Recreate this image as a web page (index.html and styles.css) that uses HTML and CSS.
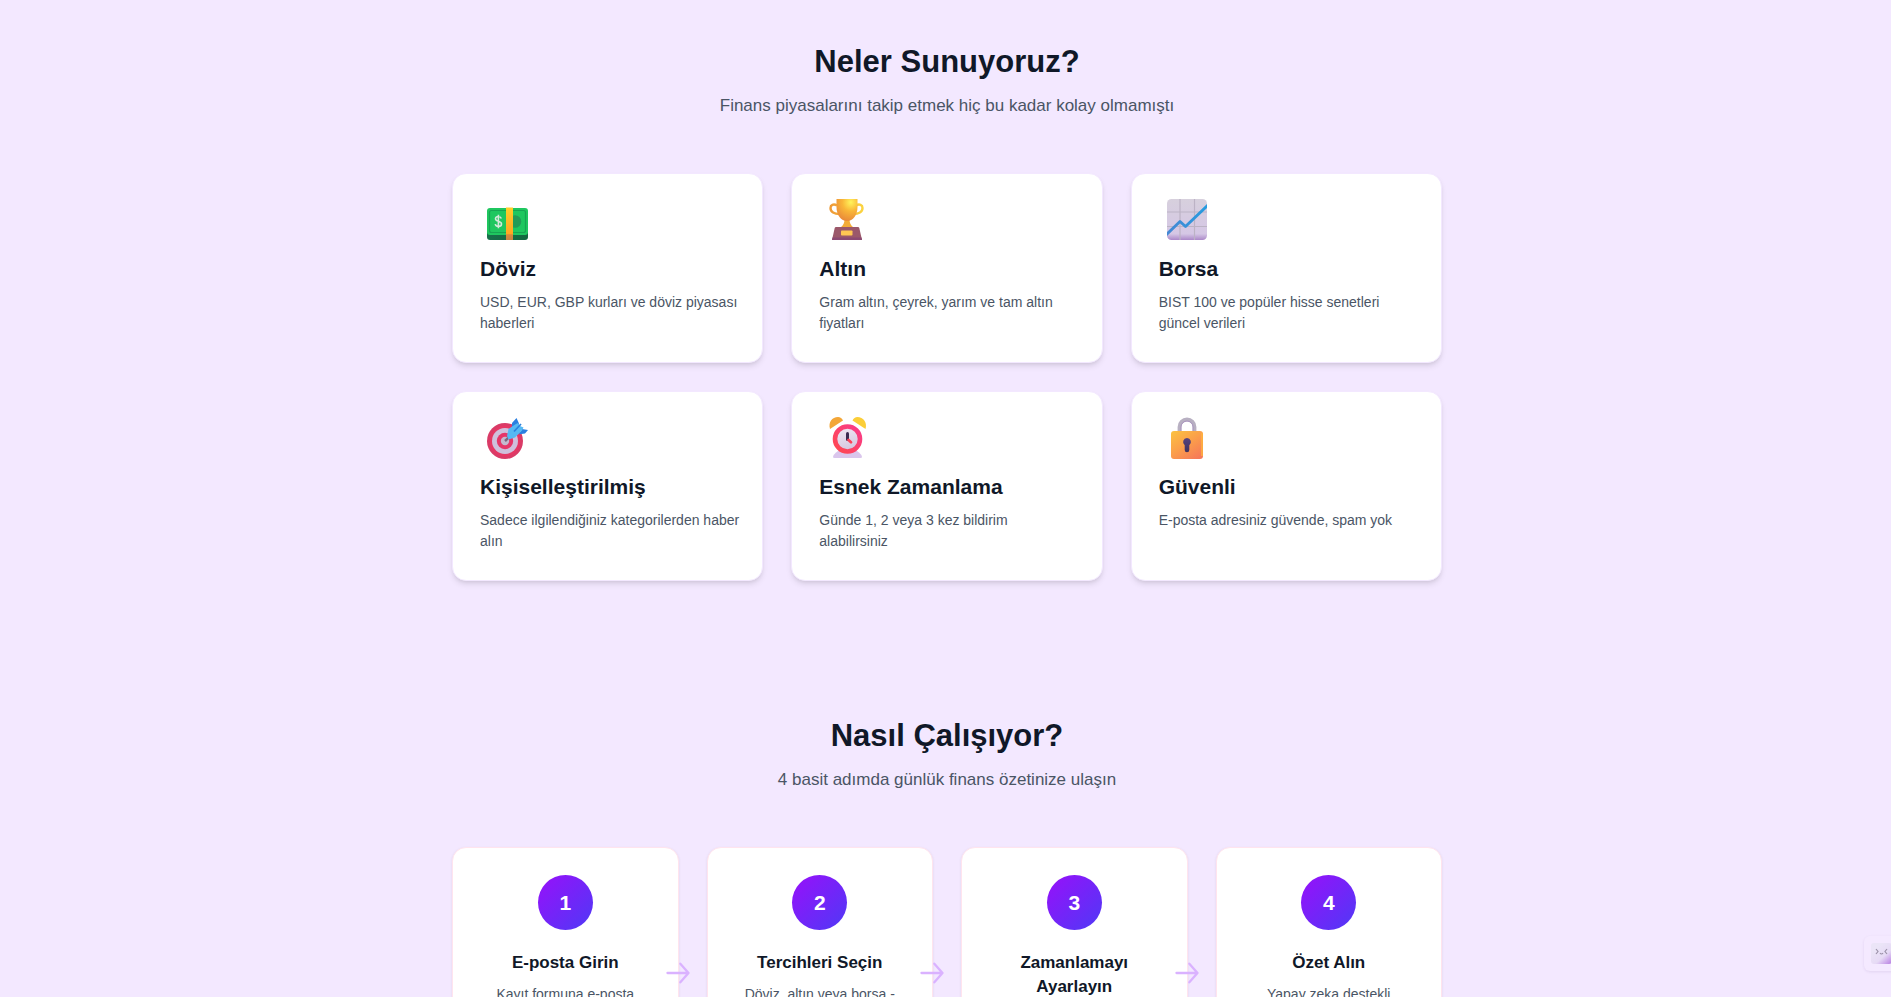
FILE: index.html
```html
<!DOCTYPE html>
<html lang="tr">
<head>
<meta charset="utf-8">
<title>Günlük Finans Özeti</title>
<link rel="stylesheet" href="styles.css">
</head>
<body>
<main>
  <section class="section">
    <header class="section-head">
      <h2>Neler Sunuyoruz?</h2>
      <p>Finans piyasalarını takip etmek hiç bu kadar kolay olmamıştı</p>
    </header>
    <div class="features">
      <article class="card">
        <svg class="icon" viewBox="0 0 56 44" aria-hidden="true">
          <defs>
            <linearGradient id="band" x1="0" y1="0" x2="0" y2="1"><stop offset="0" stop-color="#ffd02a"/><stop offset=".8" stop-color="#ffa722"/><stop offset=".84" stop-color="#d8893c"/><stop offset="1" stop-color="#c98242"/></linearGradient>
            <linearGradient id="side" x1="0" y1="0" x2="1" y2="0"><stop offset="0" stop-color="#17714b"/><stop offset="1" stop-color="#12673f"/></linearGradient>
          </defs>
          <rect x="7" y="11" width="41" height="30" rx="3" fill="url(#side)"/>
          <rect x="7" y="9" width="41" height="27" rx="3" fill="#1fc75f"/>
          <rect x="9.500" y="11.500" width="36" height="22" rx="2" fill="none" stroke="#17a553" stroke-width="1.200"/>
          <circle cx="35" cy="22.500" r="6.300" fill="#239b57"/>
          <path d="M21.300 19.500c-.5-1.500-1.500-2-3-2-1.700 0-2.800.9-2.800 2.300 0 3.300 6 1.800 6 5.200 0 1.500-1.300 2.400-3.100 2.400-1.700 0-2.800-.8-3.200-2.300M18.400 15.800v13.400" fill="none" stroke="#d5e8da" stroke-width="1.600"/>
          <rect x="26" y="8.500" width="7" height="32.500" fill="url(#band)"/>
        </svg>
        <h3>Döviz</h3>
        <p>USD, EUR, GBP kurları ve döviz piyasası haberleri</p>
      </article>
      <article class="card">
        <svg class="icon" viewBox="0 0 56 44" aria-hidden="true">
          <defs>
            <radialGradient id="cup" cx=".68" cy=".15" r=".9"><stop offset="0" stop-color="#fff45c"/><stop offset=".45" stop-color="#f9b638"/><stop offset="1" stop-color="#e8873a"/></radialGradient>
            <linearGradient id="handle" x1="0" y1="0" x2="1" y2="0"><stop offset="0" stop-color="#ee9a37"/><stop offset="1" stop-color="#fbd440"/></linearGradient>
          </defs>
          <path d="M18 6.500c-3.500-2-6.500-.5-6.500 2.500 0 4 4 6 9 6M37 6.500c3.500-2 6.500-.5 6.500 2.500 0 4-4 6-9 6" fill="none" stroke="url(#handle)" stroke-width="2.400"/>
          <path d="M25.500 20h5c0 4 1 6 4 8.500h-13c3-2.500 4-4.500 4-8.500z" fill="#f3ac38"/>
          <path d="M17.500 0h21v8c0 8-4.500 14-10.500 14S17.500 16 17.500 8z" fill="url(#cup)"/>
          <path d="M17 28h22q1 0 1.300 1L43 41H13l2.700-12q.3-1 1.300-1z" fill="#9b586a"/>
          <path d="M13.500 38.500h29L43 41H13z" fill="#8b4972"/>
          <rect x="22" y="31.500" width="11.500" height="5" rx=".8" fill="#ffc653"/>
        </svg>
        <h3>Altın</h3>
        <p>Gram altın, çeyrek, yarım ve tam altın fiyatları</p>
      </article>
      <article class="card">
        <svg class="icon" viewBox="0 0 56 44" aria-hidden="true">
          <defs>
            <linearGradient id="paper" x1="0" y1="0" x2="0" y2="1"><stop offset="0" stop-color="#d7d0dd"/><stop offset=".85" stop-color="#d5c7e5"/><stop offset="1" stop-color="#ab88c9"/></linearGradient>
            <linearGradient id="trend" x1="0" y1="0" x2="1" y2="0"><stop offset="0" stop-color="#4787d3"/><stop offset="1" stop-color="#259de0"/></linearGradient>
            <clipPath id="paperclip"><rect x="8" y="0" width="40" height="41" rx="4.500"/></clipPath>
          </defs>
          <g clip-path="url(#paperclip)">
            <rect x="8" y="0" width="40" height="41" fill="url(#paper)"/>
            <path d="M21 0v41M35.500 0v41M8 13h40M8 27.500h40" stroke="#bcb3c5" stroke-width="1.200"/>
            <path d="M6.500 36.500l14.500-14 5.500 5L50 5" fill="none" stroke="url(#trend)" stroke-width="2.900" stroke-linejoin="round"/>
          </g>
        </svg>
        <h3>Borsa</h3>
        <p>BIST 100 ve popüler hisse senetleri güncel verileri</p>
      </article>
      <article class="card">
        <svg class="icon" viewBox="0 0 56 44" aria-hidden="true">
          <circle cx="25" cy="24" r="18" fill="#d93b67"/>
          <circle cx="25" cy="24" r="15.500" fill="#e53764"/>
          <circle cx="25" cy="24" r="13" fill="#cfc0dc"/>
          <circle cx="25" cy="24" r="8.200" fill="#e63568"/>
          <circle cx="25" cy="24" r="4.200" fill="#c5b8cf"/>
          <path d="M25 24l6-5.500" stroke="#77687f" stroke-width="2.400"/>
          <path d="M32 12V6l4.500-5 2.500 5.500-3 8zM39 17l3-5 6 1-3 3.500-7 1z" fill="#2b7fdf"/>
          <path d="M27 19l1.500-7q4-3 7.500-5l2-1 2 3 3.500 1.500-1.500 3-7 7-6.500 2z" fill="#55b9f3"/>
          <path d="M34 14.500l7-7.500" stroke="#2b80dd" stroke-width="1.700"/>
        </svg>
        <h3>Kişiselleştirilmiş</h3>
        <p>Sadece ilgilendiğiniz kategorilerden haber alın</p>
      </article>
      <article class="card">
        <svg class="icon" viewBox="0 0 56 44" aria-hidden="true">
          <defs>
            <linearGradient id="dial" x1="0" y1="0" x2=".3" y2="1"><stop offset="0" stop-color="#f2ebf7"/><stop offset="1" stop-color="#d5c7df"/></linearGradient>
            <linearGradient id="ring" x1="1" y1="0" x2="0" y2="1"><stop offset="0" stop-color="#f83a8a"/><stop offset="1" stop-color="#ff484f"/></linearGradient>
          </defs>
          <path d="M14 40q0-2 3-4.500l4-3h15l4 3q3 2.500 3 4.500 0 1-1.500 1h-26Q14 41 14 40z" fill="#dac6ec"/>
          <path d="M11 12C9 5 13 0 19 0q3.500 0 5 3.500z" fill="#f3a638"/>
          <path d="M46.500 12C48.500 5 44 0 38.500 0q-3.500 0-5 3.500z" fill="#fbce38"/>
          <circle cx="28.500" cy="22" r="12.500" fill="url(#dial)" stroke="url(#ring)" stroke-width="4.600"/>
          <path d="M28.500 16.500v6" stroke="#3c2b52" stroke-width="3" stroke-linecap="round"/>
          <path d="M29.500 23l2.500 2.200" stroke="#ff4058" stroke-width="2.800" stroke-linecap="round"/>
        </svg>
        <h3>Esnek Zamanlama</h3>
        <p>Günde 1, 2 veya 3 kez bildirim alabilirsiniz</p>
      </article>
      <article class="card">
        <svg class="icon" viewBox="0 0 56 44" aria-hidden="true">
          <defs>
            <linearGradient id="lock" x1="0" y1="0" x2=".8" y2="1"><stop offset="0" stop-color="#fbc341"/><stop offset=".5" stop-color="#fba04a"/><stop offset="1" stop-color="#f67a58"/></linearGradient>
            <linearGradient id="hole" x1="0" y1="0" x2="0" y2="1"><stop offset="0" stop-color="#56427f"/><stop offset="1" stop-color="#3f315c"/></linearGradient>
          </defs>
          <path d="M20.500 16v-6a7.500 7.500 0 0 1 15 0v6" fill="none" stroke="#b8b0c2" stroke-width="3.800"/>
          <path d="M22 15v-5a6 6 0 0 1 12 0v5" fill="none" stroke="#a58abc" stroke-width=".8"/>
          <rect x="12" y="14" width="32" height="28" rx="3" fill="url(#lock)"/>
          <path d="M43 16v23" stroke="#ffb43e" stroke-width="1.500"/>
          <path d="M28 21a4 4 0 0 1 2.300 7.200V33a2.300 2.300 0 0 1-4.600 0v-4.800A4 4 0 0 1 28 21z" fill="url(#hole)"/>
        </svg>
        <h3>Güvenli</h3>
        <p>E-posta adresiniz güvende, spam yok</p>
      </article>
    </div>
  </section>

  <section class="section">
    <header class="section-head">
      <h2>Nasıl Çalışıyor?</h2>
      <p>4 basit adımda günlük finans özetinize ulaşın</p>
    </header>
    <ol class="steps">
      <li class="step">
        <span class="number">1</span>
        <h3>E-posta Girin</h3>
        <p>Kayıt formuna e-posta</p>
        <svg class="arrow" viewBox="0 0 24 24" aria-hidden="true"><path d="M14 4l7 8-7 8M21 12H3"/></svg>
      </li>
      <li class="step">
        <span class="number">2</span>
        <h3>Tercihleri Seçin</h3>
        <p>Döviz, altın veya borsa -</p>
        <svg class="arrow" viewBox="0 0 24 24" aria-hidden="true"><path d="M14 4l7 8-7 8M21 12H3"/></svg>
      </li>
      <li class="step">
        <span class="number">3</span>
        <h3>Zamanlamayı Ayarlayın</h3>
        <svg class="arrow" viewBox="0 0 24 24" aria-hidden="true"><path d="M14 4l7 8-7 8M21 12H3"/></svg>
      </li>
      <li class="step">
        <span class="number">4</span>
        <h3>Özet Alın</h3>
        <p>Yapay zeka destekli</p>
      </li>
    </ol>
  </section>
</main>
<button class="assistant" type="button" aria-label="Asistan">
  <svg viewBox="0 0 21 21" aria-hidden="true">
    <defs><linearGradient id="face" x1=".3" y1=".2" x2="1" y2="1"><stop offset="0" stop-color="#ebe5f7"/><stop offset=".5" stop-color="#e6daf5"/><stop offset="1" stop-color="#b67be2"/></linearGradient></defs>
    <rect width="21" height="21" rx="3" fill="url(#face)"/>
    <path d="M5 6l2 2.500L5 11M16 6l-2 2.500 2 2.500M9 10q1.500 2 3 0" fill="none" stroke="#9b91a8" stroke-width="1.200"/>
  </svg>
</button>
</body>
</html>
```
FILE: styles.css
```css
* {
  box-sizing: border-box;
  margin: 0;
  padding: 0;
}

body {
  padding-left: 3px;
  overflow-x: hidden;
  background: #f3e8ff;
  color: #101828;
  font: 14px/21px "Liberation Sans", Arial, sans-serif;
}

.section {
  max-width: 990px;
  margin: 0 auto;
  padding: 44px 0 93px;
}

.section-head {
  margin-bottom: 55px;
  text-align: center;
}

.section-head h2 {
  margin-bottom: 14px;
  font-size: 31px;
  line-height: 36px;
}

.section-head p {
  color: #4a5565;
  font-size: 17px;
  line-height: 24px;
}

.features {
  display: grid;
  grid-template-columns: repeat(3, 1fr);
  gap: 28px;
}

.card {
  padding: 25px 22px 28px 27px;
  border: 1px solid #f3e8ff;
  border-radius: 14px;
  background: #fff;
  box-shadow: 0 4px 6px -1px rgba(0, 0, 0, 0.1), 0 2px 4px -2px rgba(0, 0, 0, 0.1);
}

.icon {
  display: block;
  width: 56px;
  height: 44px;
  margin-bottom: 12px;
}

.card h3 {
  margin-bottom: 9px;
  font-size: 21px;
  line-height: 28px;
}

.card p,
.step p {
  color: #4a5565;
}

.steps {
  display: grid;
  grid-template-columns: repeat(4, 1fr);
  gap: 28px;
  list-style: none;
}

.step {
  position: relative;
  min-height: 252px;
  padding: 27px;
  border: 1px solid #ffe4ee;
  border-radius: 14px;
  background: #fff;
  box-shadow: 0 1px 3px rgba(0, 0, 0, 0.08);
  text-align: center;
}

.number {
  display: grid;
  place-items: center;
  width: 55px;
  height: 55px;
  margin: 0 auto 21px;
  border-radius: 50%;
  background: linear-gradient(135deg, #9810fa, #4f39f6);
  color: #fff;
  font-size: 21px;
  font-weight: 700;
}

.step h3 {
  margin-bottom: 9px;
  font-size: 17px;
  line-height: 24px;
}

.arrow {
  position: absolute;
  top: 50%;
  right: -14px;
  width: 28px;
  height: 28px;
  margin-top: -14px;
  fill: none;
  stroke: #dab2ff;
  stroke-width: 2;
  stroke-linecap: round;
  stroke-linejoin: round;
}

.assistant {
  position: fixed;
  right: -8px;
  bottom: 26px;
  padding: 7px;
  border: 0;
  border-radius: 6px;
  background: #f4e9ff;
  box-shadow: 0 1px 3px rgba(80, 40, 120, 0.1);
}

.assistant svg {
  display: block;
  width: 21px;
  height: 21px;
}
```
